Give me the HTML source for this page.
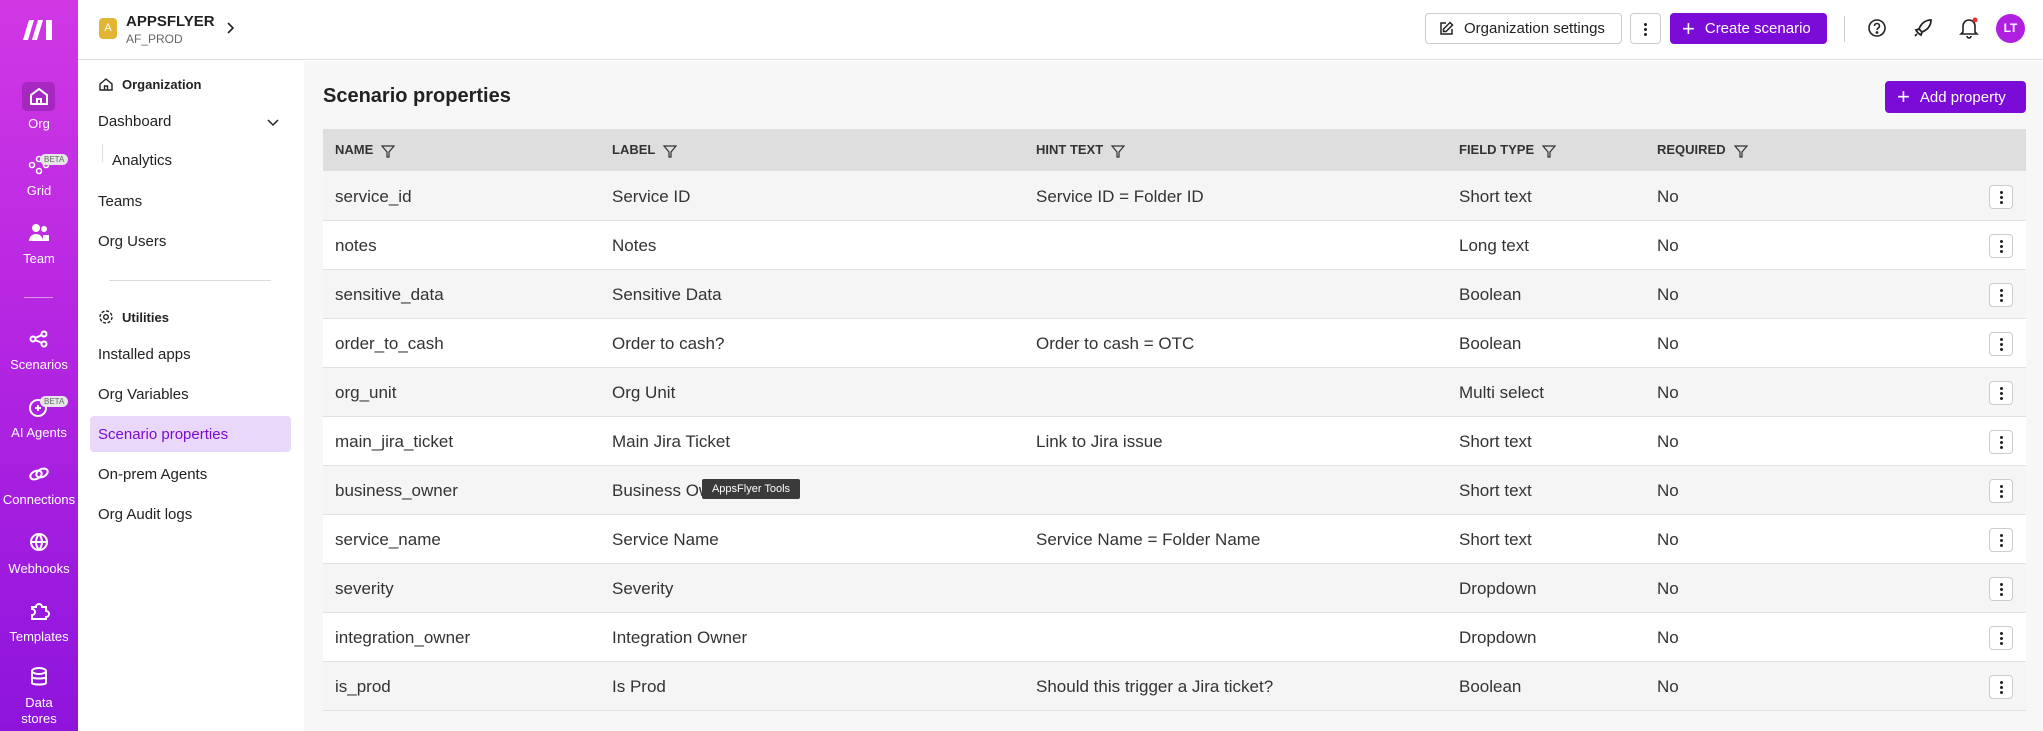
<!DOCTYPE html>
<html><head><meta charset="utf-8"><style>
*{box-sizing:border-box;margin:0;padding:0}
body{width:2043px;height:731px;overflow:hidden;font-family:"Liberation Sans",sans-serif;color:#222;background:#fff;position:relative}
.sb{position:absolute;left:0;top:0;width:78px;height:731px;background:linear-gradient(180deg,#d138e4 0%,#b526e2 45%,#8e14dc 100%);color:#fff}
.si{position:absolute;left:0;width:78px;text-align:center;font-size:13px}
.ic{position:absolute;left:27px;width:24px;height:24px}
.beta{position:absolute;left:40px;font-size:8px;background:#e6e6e6;color:#666;border-radius:8px;padding:1px 4px}
.nav{position:absolute;left:78px;top:60px;width:226px;height:671px;background:#fff}
.top{position:absolute;left:78px;top:0;width:1965px;height:60px;border-bottom:1px solid #ddd;background:#fff}
.ni{position:absolute;left:20px;font-size:15px;color:#222}
.main{position:absolute;left:304px;top:61px;width:1739px;height:670px;background:#f7f7f7}
table{position:absolute;left:19px;top:68px;width:1703px;border-collapse:collapse;font-size:17px}
th{height:42px;background:#dedede;text-align:left;font-size:13px;font-weight:bold;color:#333;padding-left:12px}
td{height:49px;padding-left:12px;border-bottom:1px solid #e2e2e2;color:#333;padding-top:3px}
td:last-child{text-align:right;padding-right:13px}
tr.g td{background:#f5f5f5}tr.w td{background:#fff}
.f{display:inline-block;vertical-align:middle;margin-left:8px}
.kb{display:inline-block;width:24px;height:24px;border:1px solid #ccc;border-radius:4px;background:#fff;position:relative;vertical-align:middle}
.kb i{position:absolute;left:10px;width:3px;height:3px;border-radius:2px;background:#222}
.btn{position:absolute;top:13px;height:31px;border-radius:4px;font-size:15px;display:flex;align-items:center}
</style></head><body>
<div class="sb">
 <svg style="position:absolute;left:23px;top:20px" width="32" height="20" viewBox="0 0 32 20" fill="#fff"><path d="M6 0h5L5 20H0z"/><path d="M15 0h5l-6 20H9z"/><path d="M23 0h6v20h-6z"/></svg>
 <div style="position:absolute;left:22px;top:82px;width:33px;height:29px;background:rgba(100,20,130,.35);border-radius:5px"></div>
 <svg class="ic" style="top:84px" viewBox="0 0 24 24" fill="none" stroke="#fff" stroke-width="2"><path d="M4 11l8-6 8 6v9H4z M10 20v-5h4v5"/></svg>
 <div class="si" style="top:116px">Org</div>
 <svg class="ic" style="top:153px" viewBox="0 0 24 24" fill="none" stroke="#fff" stroke-width="1.6"><circle cx="5" cy="12" r="2.5"/><circle cx="12" cy="6" r="2.5"/><circle cx="12" cy="18" r="2.5"/><circle cx="19" cy="12" r="2.5"/></svg>
 <span class="beta" style="top:154px">BETA</span>
 <div class="si" style="top:183px">Grid</div>
 <svg class="ic" style="top:221px" viewBox="0 0 24 24" fill="#fff"><circle cx="9" cy="7" r="4"/><path d="M2 20c0-5 4-7 7-7s7 2 7 7z"/><circle cx="17" cy="8" r="3"/><path d="M16 20v-6h6v6z"/></svg>
 <div class="si" style="top:251px">Team</div>
 <div style="position:absolute;left:24px;top:297px;width:29px;height:1px;background:rgba(255,255,255,.5)"></div>
 <svg class="ic" style="top:327px" viewBox="0 0 24 24" fill="none" stroke="#fff" stroke-width="2"><circle cx="6" cy="12" r="2.5"/><circle cx="17" cy="7" r="2.5"/><circle cx="17" cy="17" r="2.5"/><path d="M8 11l7-3M8 13l7 3"/></svg>
 <div class="si" style="top:357px">Scenarios</div>
 <svg class="ic" style="top:395px" viewBox="0 0 24 24" fill="none" stroke="#fff" stroke-width="2"><circle cx="11" cy="13" r="8"/><path d="M8 13h6M11 10v6"/></svg>
 <span class="beta" style="top:396px">BETA</span>
 <div class="si" style="top:425px">AI Agents</div>
 <svg class="ic" style="top:462px" viewBox="0 0 24 24" fill="none" stroke="#fff" stroke-width="2"><ellipse cx="9" cy="13" rx="6" ry="4" transform="rotate(-25 9 13)"/><ellipse cx="15" cy="11" rx="6" ry="4" transform="rotate(-25 15 11)"/></svg>
 <div class="si" style="top:492px">Connections</div>
 <svg class="ic" style="top:530px" viewBox="0 0 24 24" fill="none" stroke="#fff" stroke-width="2"><circle cx="12" cy="12" r="8"/><path d="M4 12h16M12 4c-4 5-4 11 0 16M12 4c4 5 4 11 0 16"/></svg>
 <div class="si" style="top:561px">Webhooks</div>
 <svg class="ic" style="top:599px" viewBox="0 0 24 24" fill="none" stroke="#fff" stroke-width="2"><path d="M5 8h4a3 3 0 016 0h4v4a3 3 0 010 6v2H5v-4a3 3 0 000-6z"/></svg>
 <div class="si" style="top:629px">Templates</div>
 <svg class="ic" style="top:665px" viewBox="0 0 24 24" fill="none" stroke="#fff" stroke-width="2"><ellipse cx="12" cy="6" rx="7" ry="3"/><path d="M5 6v12c0 2 14 2 14 0V6M5 12c0 2 14 2 14 0"/></svg>
 <div class="si" style="top:695px;line-height:16px">Data<br>stores</div>
</div>
<div class="top">
 <div style="position:absolute;left:21px;top:18px;width:18px;height:21px;background:#e2b534;border-radius:4px;color:#fff;font-size:11px;text-align:center;line-height:21px">A</div>
 <div style="position:absolute;left:48px;top:13px;font-size:15px;font-weight:bold">APPSFLYER</div>
 <div style="position:absolute;left:48px;top:32px;font-size:12px;color:#666">AF_PROD</div>
 <svg style="position:absolute;left:147px;top:21px" width="10" height="14" viewBox="0 0 10 14" fill="none" stroke="#222" stroke-width="1.6"><path d="M3 2l5 5-5 5"/></svg>
 <div class="btn" style="left:1347px;width:197px;border:1px solid #ccc;color:#222;padding-left:12px"><svg width="16" height="16" viewBox="0 0 16 16" fill="none" stroke="#222" stroke-width="1.5" style="margin-right:10px"><path d="M8 2H3v11h11V8M12 1.5l2.5 2.5L8 10.5H5.5V8z"/></svg>Organization settings</div>
 <div class="btn" style="left:1552px;width:31px;border:1px solid #ccc"><div class="kb" style="border:none;margin-left:3px"><i style="top:6px"></i><i style="top:11px"></i><i style="top:16px"></i></div></div>
 <div class="btn" style="left:1592px;width:157px;background:#7b0bd6;color:#fff;padding-left:12px"><span style="font-size:22px;margin-right:10px">+</span>Create scenario</div>
 <div style="position:absolute;left:1766px;top:16px;width:1px;height:26px;background:#ccc"></div>
 <svg style="position:absolute;left:1789px;top:18px" width="20" height="20" viewBox="0 0 20 20" fill="none" stroke="#222" stroke-width="1.6"><circle cx="10" cy="10" r="8"/><path d="M7.5 8a2.5 2.5 0 115 0c0 2-2.5 2-2.5 4"/><circle cx="10" cy="14.5" r=".6" fill="#222"/></svg>
 <svg style="position:absolute;left:1835px;top:18px" width="20" height="20" viewBox="0 0 20 20" fill="none" stroke="#222" stroke-width="1.8"><path d="M18 2c-6 0-10 4-12 9l3 3c5-2 9-6 9-12zM6 11l-3 1 2 3M9 14l-1 3-3-2M4 16l-2 2"/></svg>
 <svg style="position:absolute;left:1881px;top:17px" width="20" height="22" viewBox="0 0 20 22" fill="none" stroke="#222" stroke-width="1.6"><path d="M4 15V9a6 6 0 0112 0v6l2 2H2zM8 19a2 2 0 004 0"/><circle cx="16" cy="3" r="2.5" fill="#e33" stroke="none"/></svg>
 <div style="position:absolute;left:1918px;top:14px;width:29px;height:29px;border-radius:50%;background:#b020e0;color:#fff;font-size:12px;font-weight:bold;text-align:center;line-height:29px">LT</div>
</div>
<div class="nav">
 <svg style="position:absolute;left:20px;top:16px" width="16" height="16" viewBox="0 0 16 16" fill="none" stroke="#222" stroke-width="1.4"><path d="M2 8l6-5 6 5v6H2zM6.5 14v-4h3v4"/></svg>
 <div class="ni" style="left:44px;top:17px;font-size:13px;font-weight:bold">Organization</div>
 <div class="ni" style="top:53px">Dashboard</div>
 <svg style="position:absolute;left:188px;top:57px" width="14" height="10" viewBox="0 0 14 10" fill="none" stroke="#222" stroke-width="1.5"><path d="M2 3l5 5 5-5"/></svg>
 <div style="position:absolute;left:24px;top:84px;width:1px;height:18px;background:#ddd"></div>
 <div class="ni" style="left:34px;top:92px">Analytics</div>
 <div class="ni" style="top:133px">Teams</div>
 <div class="ni" style="top:173px">Org Users</div>
 <div style="position:absolute;left:31px;top:220px;width:162px;height:1px;background:#ddd"></div>
 <svg style="position:absolute;left:20px;top:249px" width="16" height="16" viewBox="0 0 16 16" fill="none" stroke="#222" stroke-width="1.4"><circle cx="8" cy="8" r="2.3"/><circle cx="8" cy="8" r="6" stroke-dasharray="3 1.7"/></svg>
 <div class="ni" style="left:44px;top:250px;font-size:13px;font-weight:bold">Utilities</div>
 <div class="ni" style="top:286px">Installed apps</div>
 <div class="ni" style="top:326px">Org Variables</div>
 <div style="position:absolute;left:12px;top:356px;width:201px;height:36px;background:#ead8fb;border-radius:4px"></div>
 <div class="ni" style="top:366px;color:#7b0bd6">Scenario properties</div>
 <div class="ni" style="top:406px">On-prem Agents</div>
 <div class="ni" style="top:446px">Org Audit logs</div>
</div>
<div class="main">
 <div style="position:absolute;left:19px;top:24px;font-size:20px;font-weight:bold">Scenario properties</div>
 <div class="btn" style="left:1581px;top:20px;width:141px;height:32px;background:#7b0bd6;color:#fff;padding-left:12px"><span style="font-size:22px;margin-right:10px">+</span>Add property</div>
 <table>
 <tr><th style="width:277px">NAME<svg class="f" width="14" height="13" viewBox="0 0 14 13" fill="none" stroke="#333" stroke-width="1.2"><path d="M1 1h12L8 7v5H6V7z"/></svg></th><th style="width:424px">LABEL<svg class="f" width="14" height="13" viewBox="0 0 14 13" fill="none" stroke="#333" stroke-width="1.2"><path d="M1 1h12L8 7v5H6V7z"/></svg></th><th style="width:423px">HINT TEXT<svg class="f" width="14" height="13" viewBox="0 0 14 13" fill="none" stroke="#333" stroke-width="1.2"><path d="M1 1h12L8 7v5H6V7z"/></svg></th><th style="width:198px">FIELD TYPE<svg class="f" width="14" height="13" viewBox="0 0 14 13" fill="none" stroke="#333" stroke-width="1.2"><path d="M1 1h12L8 7v5H6V7z"/></svg></th><th>REQUIRED<svg class="f" width="14" height="13" viewBox="0 0 14 13" fill="none" stroke="#333" stroke-width="1.2"><path d="M1 1h12L8 7v5H6V7z"/></svg></th><th style="width:60px"></th></tr>
 <tr class="g"><td>service_id</td><td>Service ID</td><td>Service ID = Folder ID</td><td>Short text</td><td>No</td><td><span class="kb"><i style="top:5px"></i><i style="top:10px"></i><i style="top:15px"></i></span></td></tr>
 <tr class="w"><td>notes</td><td>Notes</td><td></td><td>Long text</td><td>No</td><td><span class="kb"><i style="top:5px"></i><i style="top:10px"></i><i style="top:15px"></i></span></td></tr>
 <tr class="g"><td>sensitive_data</td><td>Sensitive Data</td><td></td><td>Boolean</td><td>No</td><td><span class="kb"><i style="top:5px"></i><i style="top:10px"></i><i style="top:15px"></i></span></td></tr>
 <tr class="w"><td>order_to_cash</td><td>Order to cash?</td><td>Order to cash = OTC</td><td>Boolean</td><td>No</td><td><span class="kb"><i style="top:5px"></i><i style="top:10px"></i><i style="top:15px"></i></span></td></tr>
 <tr class="g"><td>org_unit</td><td>Org Unit</td><td></td><td>Multi select</td><td>No</td><td><span class="kb"><i style="top:5px"></i><i style="top:10px"></i><i style="top:15px"></i></span></td></tr>
 <tr class="w"><td>main_jira_ticket</td><td>Main Jira Ticket</td><td>Link to Jira issue</td><td>Short text</td><td>No</td><td><span class="kb"><i style="top:5px"></i><i style="top:10px"></i><i style="top:15px"></i></span></td></tr>
 <tr class="g"><td>business_owner</td><td>Business Owner</td><td></td><td>Short text</td><td>No</td><td><span class="kb"><i style="top:5px"></i><i style="top:10px"></i><i style="top:15px"></i></span></td></tr>
 <tr class="w"><td>service_name</td><td>Service Name</td><td>Service Name = Folder Name</td><td>Short text</td><td>No</td><td><span class="kb"><i style="top:5px"></i><i style="top:10px"></i><i style="top:15px"></i></span></td></tr>
 <tr class="g"><td>severity</td><td>Severity</td><td></td><td>Dropdown</td><td>No</td><td><span class="kb"><i style="top:5px"></i><i style="top:10px"></i><i style="top:15px"></i></span></td></tr>
 <tr class="w"><td>integration_owner</td><td>Integration Owner</td><td></td><td>Dropdown</td><td>No</td><td><span class="kb"><i style="top:5px"></i><i style="top:10px"></i><i style="top:15px"></i></span></td></tr>
 <tr class="g"><td>is_prod</td><td>Is Prod</td><td>Should this trigger a Jira ticket?</td><td>Boolean</td><td>No</td><td><span class="kb"><i style="top:5px"></i><i style="top:10px"></i><i style="top:15px"></i></span></td></tr>
 </table>
</div>
<div style="position:absolute;left:702px;top:479px;width:98px;height:20px;background:#3a3a3a;color:#fff;font-size:11px;text-align:center;line-height:20px;border-radius:2px">AppsFlyer Tools</div>
</body></html>
